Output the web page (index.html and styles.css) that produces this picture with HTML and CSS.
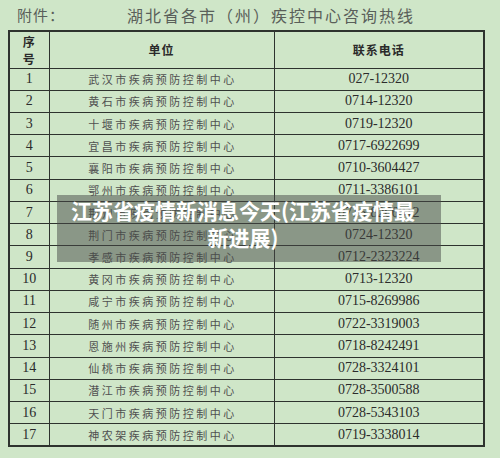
FILE: index.html
```html
<!DOCTYPE html>
<html lang="zh">
<head>
<meta charset="utf-8">
<link rel="stylesheet" href="styles.css">
</head>
<body>
<div class="page">
  <div class="title-row">
    <span class="attach">附件：</span>
    <span class="title">湖北省各市（州）疾控中心咨询热线</span>
  </div>
  <table class="hotline">
    <colgroup><col class="c-no"><col class="c-unit"><col class="c-tel"></colgroup>
    <thead>
      <tr><th class="hd-no">序<br>号</th><th>单位</th><th>联系电话</th></tr>
    </thead>
    <tbody>
      <tr><td class="no">1</td><td class="unit">武汉市疾病预防控制中心</td><td class="tel">027-12320</td></tr>
      <tr><td class="no">2</td><td class="unit">黄石市疾病预防控制中心</td><td class="tel">0714-12320</td></tr>
      <tr><td class="no">3</td><td class="unit">十堰市疾病预防控制中心</td><td class="tel">0719-12320</td></tr>
      <tr><td class="no">4</td><td class="unit">宜昌市疾病预防控制中心</td><td class="tel">0717-6922699</td></tr>
      <tr><td class="no">5</td><td class="unit">襄阳市疾病预防控制中心</td><td class="tel">0710-3604427</td></tr>
      <tr><td class="no">6</td><td class="unit">鄂州市疾病预防控制中心</td><td class="tel">0711-3386101</td></tr>
      <tr><td class="no">7</td><td class="unit">荆州市疾病预防控制中心</td><td class="tel">0716-8266812</td></tr>
      <tr><td class="no">8</td><td class="unit">荆门市疾病预防控制中心</td><td class="tel">0724-12320</td></tr>
      <tr><td class="no">9</td><td class="unit">孝感市疾病预防控制中心</td><td class="tel">0712-2323224</td></tr>
      <tr><td class="no">10</td><td class="unit">黄冈市疾病预防控制中心</td><td class="tel">0713-12320</td></tr>
      <tr><td class="no">11</td><td class="unit">咸宁市疾病预防控制中心</td><td class="tel">0715-8269986</td></tr>
      <tr><td class="no">12</td><td class="unit">随州市疾病预防控制中心</td><td class="tel">0722-3319003</td></tr>
      <tr><td class="no">13</td><td class="unit">恩施州疾病预防控制中心</td><td class="tel">0718-8242491</td></tr>
      <tr><td class="no">14</td><td class="unit">仙桃市疾病预防控制中心</td><td class="tel">0728-3324101</td></tr>
      <tr><td class="no">15</td><td class="unit">潜江市疾病预防控制中心</td><td class="tel">0728-3500588</td></tr>
      <tr><td class="no">16</td><td class="unit">天门市疾病预防控制中心</td><td class="tel">0728-5343103</td></tr>
      <tr><td class="no">17</td><td class="unit">神农架疾病预防控制中心</td><td class="tel">0719-3338014</td></tr>
    </tbody>
  </table>
  <div class="overlay">江苏省疫情新消息今天(江苏省疫情最<br>新进展)</div>
</div>
</body>
</html>
```

FILE: styles.css
```css
html, body {
  margin: 0;
  padding: 0;
  background: #cfe6c8;
}
body {
  width: 500px;
  height: 458px;
  overflow: hidden;
  font-family: "Noto Sans CJK SC", "Liberation Sans", sans-serif;
}
.page {
  position: relative;
  width: 500px;
  height: 458px;
}
.title-row {
  height: 30px;
  display: flex;
  align-items: center;
  color: #5a5f5a;
}
.attach {
  margin-left: 17px;
  width: 110px;
  font-size: 15px;
  letter-spacing: 1px;
  line-height: 26px;
}
.title {
  font-size: 16px;
  letter-spacing: 2px;
  line-height: 26px;
}
.hotline {
  margin-left: 8px;
  width: 475px;
  border-collapse: collapse;
  table-layout: fixed;
  border: 2px solid #2e332e;
}
.c-no { width: 40px; }
.c-unit { width: 225px; }
.c-tel { width: 210px; }
.hotline th, .hotline td {
  border: 1px solid #2e332e;
  padding: 0;
  text-align: center;
  vertical-align: middle;
}
.hotline thead tr {
  height: 37px;
}
.hotline th {
  font-size: 12px;
  font-weight: 700;
  color: #2a2a2a;
  letter-spacing: 1px;
  line-height: 17px;
}
.hotline tbody tr {
  height: 22.24px;
}
.no, .tel {
  font-family: "Liberation Serif", serif;
  font-size: 14px;
  color: #2b2b2b;
  line-height: 20px;
}
.unit {
  font-size: 11px;
  letter-spacing: 2.5px;
  color: #505050;
  line-height: 20px;
  text-indent: 2px;
}
.overlay {
  position: absolute;
  left: 57px;
  top: 195px;
  width: 384px;
  height: 67px;
  box-sizing: border-box;
  padding: 2px 12px 0 0;
  background: rgba(70, 72, 70, 0.5);
  color: #fff;
  font-size: 21px;
  font-weight: 700;
  line-height: 27px;
  text-align: center;
}
```
